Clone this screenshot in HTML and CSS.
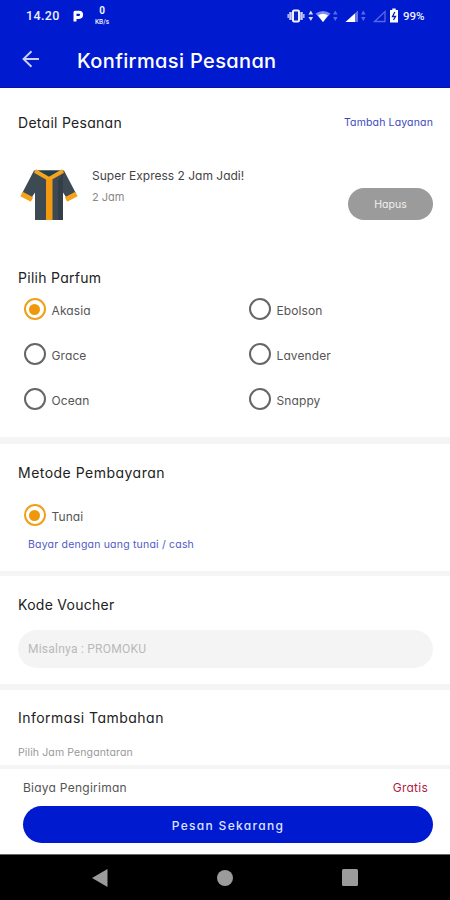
FILE: index.html
```html
<!DOCTYPE html>
<html lang="id">
<head>
<meta charset="utf-8">
<title>Konfirmasi Pesanan</title>
<link rel="stylesheet" href="styles.css">
</head>
<body>
<div class="app">
  <header class="top">
    <div class="status">
      <span class="time">14.20</span>
      <svg class="p-icon" width="12" height="14" viewBox="0 0 12 14"><path d="M3 12.500V3.200H7a2.300 2.300 0 0 1 0 5.200H4.500" fill="none" stroke="#fff" stroke-width="3" stroke-linejoin="round"/></svg>
      <span class="speed"><b>0</b><small>KB/s</small></span>
      <svg class="signals" width="100" height="16" viewBox="0 0 100 16">
        <path d="M3.500 4v8M14.500 4v8" stroke="#c6ccf8" stroke-width="2.500"/><path d="M1.200 6v4M16.800 6v4" stroke="#a9b2f3" stroke-width="1.600"/>
        <rect x="6" y="2.500" width="6" height="11" rx="1" fill="#0c22cf" stroke="#eef0ff" stroke-width="2"/>
        <path d="M21.500 6.500l2.300-4 2.300 4zM21.500 9l2.300 4 2.300-4z" fill="#d5dafd"/>
        <path d="M28.500 5.500Q36 .5 43.500 5.500L36 14z" fill="#7e8bef"/><path d="M31 7.200q5-3 10 0L36 14z" fill="#fff"/>
        <path d="M46 6.500l2.300-4 2.300 4zM46 9l2.300 4 2.300-4z" fill="#5a69e5"/>
        <path d="M71 2.500V14H58.500z" fill="#6574e8"/><path d="M68 5.500V14h-9.500z" fill="#fff"/>
        <path d="M74 6.500l2.300-4 2.300 4zM74 9l2.300 4 2.300-4z" fill="#5a69e5"/>
        <path d="M98 3.500v10H87.500z" fill="none" stroke="#5868e5" stroke-width="1.300"/>
      </svg>
      <svg class="battery" width="8" height="15" viewBox="0 0 8 15"><path d="M0 2h2.300V.5h3.400V2H8v12.500H0z" fill="#fff"/><path d="M4.800 4L2.500 8.500h3L3.500 12" fill="none" stroke="#0018cf" stroke-width="1.300"/></svg>
      <span class="percent">99%</span>
    </div>
    <div class="bar">
      <svg width="18" height="18" viewBox="0 0 18 18"><path d="M17 9H1.500M9.500 1.200L1.500 9l8 7.800" fill="none" stroke="#cbd0fa" stroke-width="1.900"/></svg>
      <h1>Konfirmasi Pesanan</h1>
    </div>
  </header>

  <section class="detail">
    <div class="row"><h2 class="t-detail">Detail Pesanan</h2><a class="add">Tambah Layanan</a></div>
    <div class="item">
      <svg class="shirt" width="58" height="52" viewBox="0 0 58 52">
        <path d="M14 1.500h30l12 23-9 5-4-6v27.500H15V23.500l-4 6-9-5z" fill="#3d4a53"/>
        <path d="M38 12l5-8v47h-5z" fill="#343e4b"/>
        <path d="M18 1.500h22l-11 7z" fill="#204148"/>
        <path d="M1.500 25L12 30.500M56.500 25L46 30.500" stroke="#f5a21d" stroke-width="5"/>
        <path d="M15 2l14 8L43 2" fill="none" stroke="#f5a21d" stroke-width="4"/>
        <path d="M26 10h6.500v41H26z" fill="#f49a12"/>
      </svg>
      <div class="info"><p class="name">Super Express 2 Jam Jadi!</p><p class="duration">2 Jam</p></div>
      <button class="remove">Hapus</button>
    </div>
    <h2 class="t-parfum">Pilih Parfum</h2>
    <div class="options">
      <label class="option"><i class="radio on"></i><span>Akasia</span></label>
      <label class="option"><i class="radio"></i><span>Ebolson</span></label>
      <label class="option"><i class="radio"></i><span>Grace</span></label>
      <label class="option"><i class="radio"></i><span>Lavender</span></label>
      <label class="option"><i class="radio"></i><span>Ocean</span></label>
      <label class="option"><i class="radio"></i><span>Snappy</span></label>
    </div>
  </section>

  <section class="payment">
    <h2 class="t-metode">Metode Pembayaran</h2>
    <label class="option"><i class="radio on"></i><span>Tunai</span></label>
    <p class="hint">Bayar dengan uang tunai / cash</p>
  </section>

  <section class="voucher">
    <h2 class="t-kode">Kode Voucher</h2>
    <div class="field">Misalnya : PROMOKU</div>
  </section>

  <section class="extra">
    <h2 class="t-info">Informasi Tambahan</h2>
    <p class="pick">Pilih Jam Pengantaran</p>
  </section>

  <footer class="checkout">
    <div class="fee"><span class="fee-label">Biaya Pengiriman</span><span class="free">Gratis</span></div>
    <button class="order">Pesan Sekarang</button>
  </footer>

  <nav class="nav">
    <svg width="16" height="18" viewBox="0 0 16 18"><path d="M15.500 0v18L0 9z" fill="#9b9b9b"/></svg>
    <svg width="16" height="16" viewBox="0 0 16 16"><circle cx="8" cy="8" r="8" fill="#9b9b9b"/></svg>
    <svg width="16" height="17" viewBox="0 0 16 17"><rect width="16" height="17" rx="1.500" fill="#9b9b9b"/></svg>
  </nav>
</div>
</body>
</html>
```
FILE: styles.css
```css
* { box-sizing: border-box; }
body, h1, h2, p { margin: 0; }
body { background: #fff; font-family: Inter, "Open Sans", sans-serif; font-feature-settings: "cv11" 1, "calt" 0; color: #333; }
.app { width: 450px; height: 900px; display: flex; flex-direction: column; overflow: hidden; }
button { border: 0; padding: 0; font: inherit; font-feature-settings: inherit; }
.top { height: 88px; flex: none; background: #001acf; color: #fff; border-bottom: 1px solid #0a12a5; }
.status { height: 30px; display: flex; align-items: center; padding: 1px 0 0 26px; font-family: Roboto, sans-serif; font-weight: 500; color: #eef0ff; }
.time { width: 46px; font-size: 12.500px; letter-spacing: .35px; }
.p-icon { margin-right: 9px; }
.speed { width: 18px; display: flex; flex-direction: column; align-items: center; gap: 1px; font-size: 10px; line-height: 10px; }
.speed b { line-height: 12px; }
.speed small { font-size: 6.500px; line-height: 8px; }
.signals { margin-left: 176px; flex: none; }
.battery { margin-left: 3px; flex: none; }
.percent { margin-left: 5px; font-size: 11.500px; }
.bar { height: 58px; display: flex; align-items: center; gap: 37px; padding: 2px 22px; }
h1 { font-size: 20px; font-weight: 500; line-height: 28px; letter-spacing: .36px; padding-top: 3px; white-space: nowrap; }
h2 { font-size: 14px; font-weight: 400; line-height: 20px; color: #222; white-space: nowrap; }
.t-detail, .t-parfum, .t-kode { letter-spacing: .28px; }
.t-metode, .t-info { letter-spacing: .48px; }
section { flex: none; padding: 0 17px 0 18px; border-bottom: 7px solid #f5f5f5; }
.detail { height: 356px; padding-top: 25px; }
.row { display: flex; justify-content: space-between; align-items: center; }
.add { font-size: 10.500px; letter-spacing: .15px; color: #3d48c4; line-height: 20px; }
.item { display: flex; height: 52px; margin-top: 36px; }
.shirt { margin-left: 2px; }
.info { margin-left: 14px; flex: 1; }
.name { font-size: 12px; line-height: 16px; margin-top: -1px; color: #444; white-space: nowrap; }
.duration { font-size: 11px; line-height: 16px; margin-top: 5px; color: #888; }
.remove { width: 85px; height: 32px; border-radius: 16px; background: #9b9b9b; color: #f1f1f1; font-size: 10.500px; margin-top: 19px; flex: none; line-height: 34px; }
.t-parfum { margin-top: 47px; }
.options { display: grid; grid-template-columns: 225px 1fr; row-gap: 21px; margin-top: 10px; }
.option { display: flex; align-items: center; gap: 6px; height: 24px; padding-left: 5.500px; font-size: 12px; letter-spacing: .1px; color: #555; }
.radio { width: 22px; height: 22px; margin-top: -2px; border: 2px solid #666; border-radius: 50%; display: grid; place-items: center; }
.radio.on { border-color: #efa01b; }
.radio.on::after { content: ""; width: 11px; height: 11px; border-radius: 50%; background: #f0980b; }
.payment { height: 132px; padding-top: 19px; border-bottom-width: 5px; }
.payment .option { margin-top: 21px; }
.hint { margin: 9px 0 0 10px; font-size: 10.500px; letter-spacing: .2px; line-height: 16px; color: #515bc4; white-space: nowrap; }
.voucher { height: 114px; padding-top: 19px; border-bottom-width: 6px; }
.field { height: 38px; margin-top: 15px; padding-left: 10px; border-radius: 19px; background: #f4f4f4; color: #b9b9b9; font: 12px/39px Roboto, sans-serif; letter-spacing: .24px; }
.extra { height: 79px; padding-top: 18px; border-bottom-width: 4px; }
.pick { margin-top: 17px; font-size: 10.500px; letter-spacing: .12px; line-height: 16px; color: #999; }
.checkout { height: 85px; flex: none; padding: 9px 17px 0 23px; }
.fee { height: 20px; display: flex; justify-content: space-between; padding-right: 5px; font-size: 12px; letter-spacing: .25px; line-height: 20px; color: #555; }
.free { color: #b01c45; }
.order { width: 100%; height: 37px; margin-top: 8px; border-radius: 18.500px; background: #001acf; color: #dfe2ff; font-size: 12px; font-weight: 500; letter-spacing: 1.300px; line-height: 39px; display: block; }
.nav { height: 46px; flex: none; background: #000; border-top: 1px solid #666; display: grid; grid-template-columns: repeat(3, 16px); justify-content: center; column-gap: 109px; align-items: center; }
```
